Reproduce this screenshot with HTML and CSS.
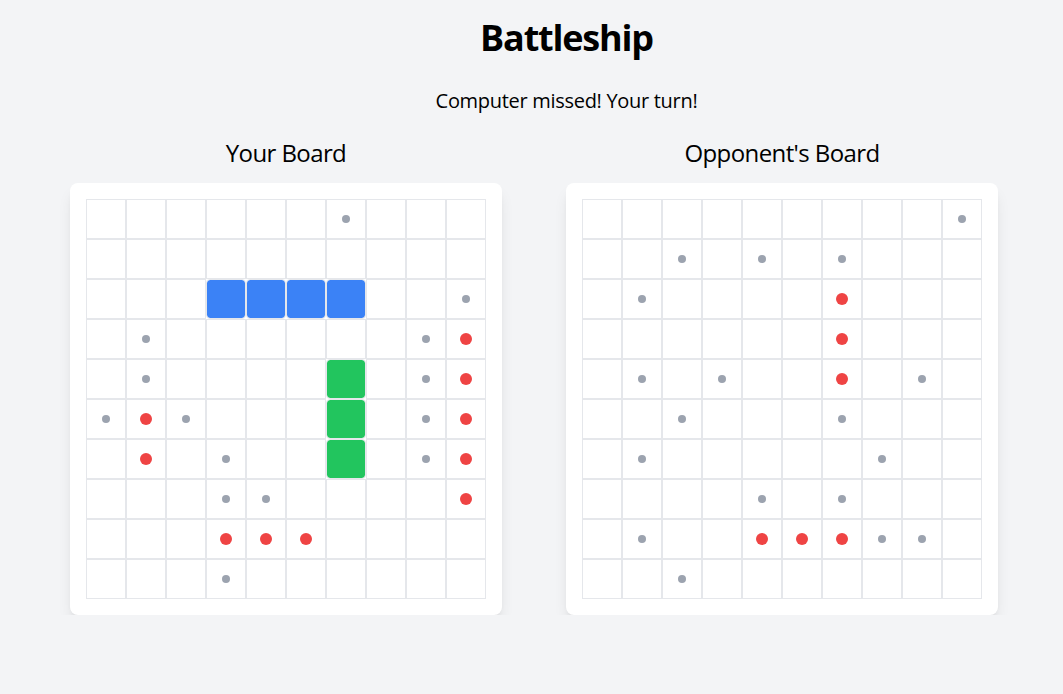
FILE: index.html
```html
<!DOCTYPE html>
<html>
<head>
<meta charset="utf-8">
<link rel="stylesheet" href="styles.css">
</head>
<body>
<header class="top">
  <h1 class="title">Battleship</h1>
  <p class="status">Computer missed! Your turn!</p>
</header>
<main class="boards">
  <section class="board">
    <h2 class="board-title">Your Board</h2>
    <div class="card">
      <div class="grid">
        <div class="c"></div><div class="c"></div><div class="c"></div><div class="c"></div><div class="c"></div><div class="c"></div><div class="c"><i class="m"></i></div><div class="c"></div><div class="c"></div><div class="c"></div>
        <div class="c"></div><div class="c"></div><div class="c"></div><div class="c"></div><div class="c"></div><div class="c"></div><div class="c"></div><div class="c"></div><div class="c"></div><div class="c"></div>
        <div class="c"></div><div class="c"></div><div class="c"></div><div class="c blue"></div><div class="c blue"></div><div class="c blue"></div><div class="c blue"></div><div class="c"></div><div class="c"></div><div class="c"><i class="m"></i></div>
        <div class="c"></div><div class="c"><i class="m"></i></div><div class="c"></div><div class="c"></div><div class="c"></div><div class="c"></div><div class="c"></div><div class="c"></div><div class="c"><i class="m"></i></div><div class="c"><i class="h"></i></div>
        <div class="c"></div><div class="c"><i class="m"></i></div><div class="c"></div><div class="c"></div><div class="c"></div><div class="c"></div><div class="c green"></div><div class="c"></div><div class="c"><i class="m"></i></div><div class="c"><i class="h"></i></div>
        <div class="c"><i class="m"></i></div><div class="c"><i class="h"></i></div><div class="c"><i class="m"></i></div><div class="c"></div><div class="c"></div><div class="c"></div><div class="c green"></div><div class="c"></div><div class="c"><i class="m"></i></div><div class="c"><i class="h"></i></div>
        <div class="c"></div><div class="c"><i class="h"></i></div><div class="c"></div><div class="c"><i class="m"></i></div><div class="c"></div><div class="c"></div><div class="c green"></div><div class="c"></div><div class="c"><i class="m"></i></div><div class="c"><i class="h"></i></div>
        <div class="c"></div><div class="c"></div><div class="c"></div><div class="c"><i class="m"></i></div><div class="c"><i class="m"></i></div><div class="c"></div><div class="c"></div><div class="c"></div><div class="c"></div><div class="c"><i class="h"></i></div>
        <div class="c"></div><div class="c"></div><div class="c"></div><div class="c"><i class="h"></i></div><div class="c"><i class="h"></i></div><div class="c"><i class="h"></i></div><div class="c"></div><div class="c"></div><div class="c"></div><div class="c"></div>
        <div class="c"></div><div class="c"></div><div class="c"></div><div class="c"><i class="m"></i></div><div class="c"></div><div class="c"></div><div class="c"></div><div class="c"></div><div class="c"></div><div class="c"></div>
      </div>
    </div>
  </section>
  <section class="board">
    <h2 class="board-title">Opponent's Board</h2>
    <div class="card">
      <div class="grid">
        <div class="c"></div><div class="c"></div><div class="c"></div><div class="c"></div><div class="c"></div><div class="c"></div><div class="c"></div><div class="c"></div><div class="c"></div><div class="c"><i class="m"></i></div>
        <div class="c"></div><div class="c"></div><div class="c"><i class="m"></i></div><div class="c"></div><div class="c"><i class="m"></i></div><div class="c"></div><div class="c"><i class="m"></i></div><div class="c"></div><div class="c"></div><div class="c"></div>
        <div class="c"></div><div class="c"><i class="m"></i></div><div class="c"></div><div class="c"></div><div class="c"></div><div class="c"></div><div class="c"><i class="h"></i></div><div class="c"></div><div class="c"></div><div class="c"></div>
        <div class="c"></div><div class="c"></div><div class="c"></div><div class="c"></div><div class="c"></div><div class="c"></div><div class="c"><i class="h"></i></div><div class="c"></div><div class="c"></div><div class="c"></div>
        <div class="c"></div><div class="c"><i class="m"></i></div><div class="c"></div><div class="c"><i class="m"></i></div><div class="c"></div><div class="c"></div><div class="c"><i class="h"></i></div><div class="c"></div><div class="c"><i class="m"></i></div><div class="c"></div>
        <div class="c"></div><div class="c"></div><div class="c"><i class="m"></i></div><div class="c"></div><div class="c"></div><div class="c"></div><div class="c"><i class="m"></i></div><div class="c"></div><div class="c"></div><div class="c"></div>
        <div class="c"></div><div class="c"><i class="m"></i></div><div class="c"></div><div class="c"></div><div class="c"></div><div class="c"></div><div class="c"></div><div class="c"><i class="m"></i></div><div class="c"></div><div class="c"></div>
        <div class="c"></div><div class="c"></div><div class="c"></div><div class="c"></div><div class="c"><i class="m"></i></div><div class="c"></div><div class="c"><i class="m"></i></div><div class="c"></div><div class="c"></div><div class="c"></div>
        <div class="c"></div><div class="c"><i class="m"></i></div><div class="c"></div><div class="c"></div><div class="c"><i class="h"></i></div><div class="c"><i class="h"></i></div><div class="c"><i class="h"></i></div><div class="c"><i class="m"></i></div><div class="c"><i class="m"></i></div><div class="c"></div>
        <div class="c"></div><div class="c"></div><div class="c"><i class="m"></i></div><div class="c"></div><div class="c"></div><div class="c"></div><div class="c"></div><div class="c"></div><div class="c"></div><div class="c"></div>
      </div>
    </div>
  </section>
</main>
</body>
</html>
```
FILE: styles.css
```css
html, body {
  margin: 0;
  padding: 0;
}
body {
  background: #f3f4f6;
  font-family: "Open Sans", "Noto Sans", sans-serif;
  color: #000;
}
.top {
  padding-left: 70px;
  text-align: center;
}
.title {
  margin: 18px 0 0;
  font-size: 36px;
  line-height: 40px;
  font-weight: 700;
  letter-spacing: -1.2px;
}
.status {
  margin: 29px 0 0;
  font-size: 20px;
  line-height: 28px;
  letter-spacing: -0.3px;
}
.boards {
  display: flex;
  gap: 64px;
  padding-left: 70px;
  margin-top: 21px;
}
.board {
  display: flex;
  flex-direction: column;
  align-items: center;
  width: 432px;
}
.board-title {
  margin: 1px 0 14px;
  font-size: 24px;
  line-height: 32px;
  font-weight: 400;
  letter-spacing: -0.6px;
}
.card {
  background: #fff;
  padding: 16px;
  border-radius: 8px;
  box-shadow: 0 10px 15px -3px rgba(0,0,0,0.1), 0 4px 6px -4px rgba(0,0,0,0.1);
}
.grid {
  display: grid;
  grid-template-columns: repeat(10, 40px);
  grid-template-rows: repeat(10, 40px);
}
.c {
  box-sizing: border-box;
  border: 1px solid #e5e7eb;
  display: flex;
  align-items: center;
  justify-content: center;
}
.blue {
  background: #3b82f6;
  background-clip: padding-box;
  border-radius: 4px;
}
.green {
  background: #22c55e;
  background-clip: padding-box;
  border-radius: 4px;
}
.m {
  width: 8px;
  height: 8px;
  border-radius: 50%;
  background: #9ca3af;
}
.h {
  width: 12px;
  height: 12px;
  border-radius: 50%;
  background: #ef4444;
}
```
